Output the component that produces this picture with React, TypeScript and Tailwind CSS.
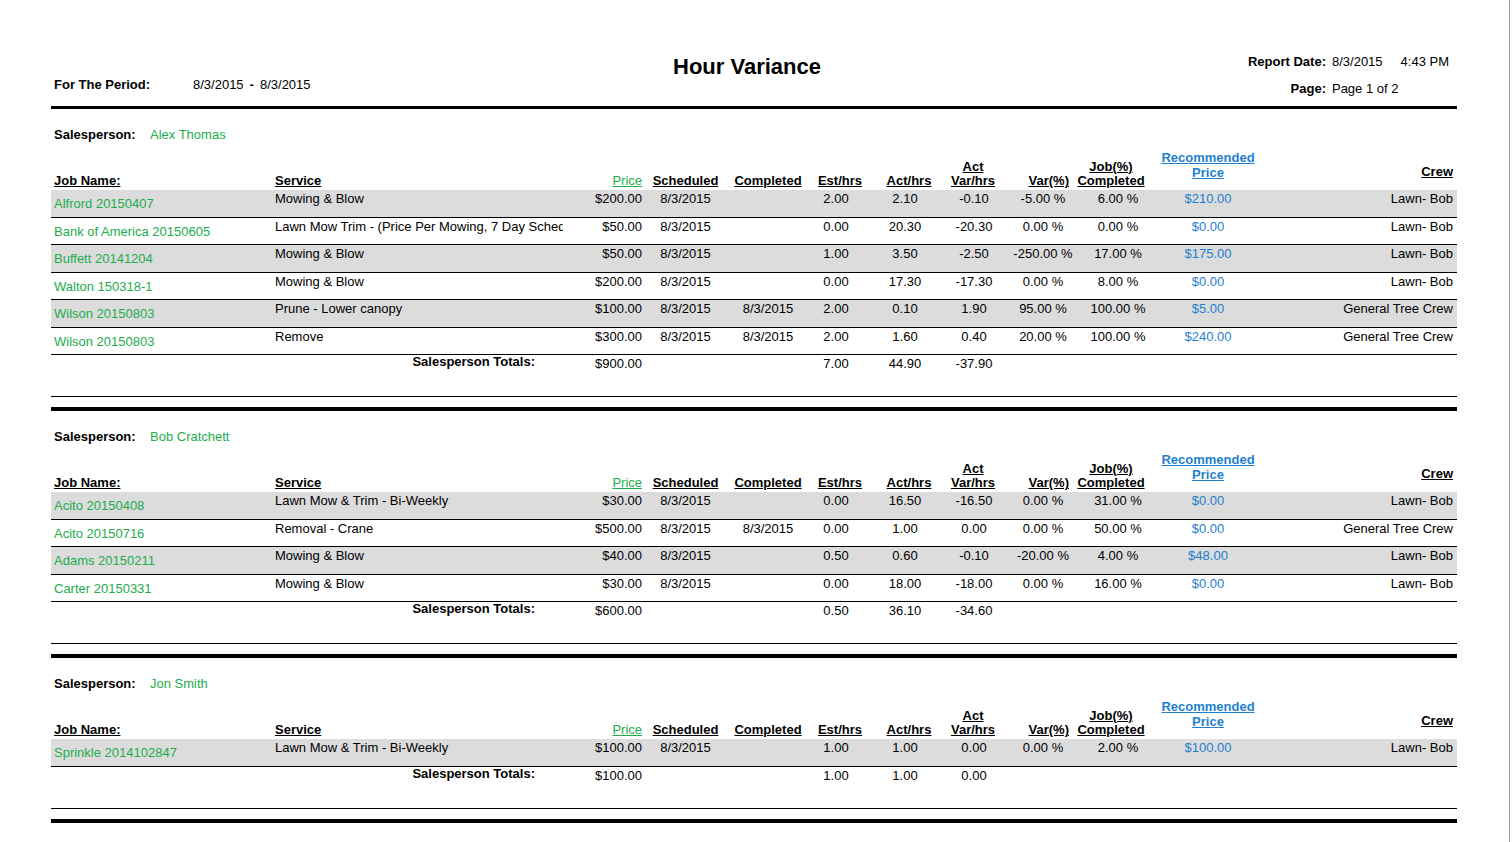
import React from 'react';

type Row = {
  job: string;
  service: string;
  price: string;
  scheduled: string;
  completed: string;
  est: string;
  act: string;
  varHrs: string;
  varPct: string;
  jobPct: string;
  rec: string;
  crew: string;
};

type Section = {
  salesperson: string;
  rows: Row[];
  totals: { price: string; est: string; act: string; varHrs: string };
};

const sections: Section[] = [
  {
    salesperson: 'Alex Thomas',
    rows: [
      { job: 'Alfrord 20150407', service: 'Mowing & Blow', price: '$200.00', scheduled: '8/3/2015', completed: '', est: '2.00', act: '2.10', varHrs: '-0.10', varPct: '-5.00 %', jobPct: '6.00 %', rec: '$210.00', crew: 'Lawn- Bob' },
      { job: 'Bank of America 20150605', service: 'Lawn Mow Trim - (Price Per Mowing, 7 Day Schedule)', price: '$50.00', scheduled: '8/3/2015', completed: '', est: '0.00', act: '20.30', varHrs: '-20.30', varPct: '0.00 %', jobPct: '0.00 %', rec: '$0.00', crew: 'Lawn- Bob' },
      { job: 'Buffett 20141204', service: 'Mowing & Blow', price: '$50.00', scheduled: '8/3/2015', completed: '', est: '1.00', act: '3.50', varHrs: '-2.50', varPct: '-250.00 %', jobPct: '17.00 %', rec: '$175.00', crew: 'Lawn- Bob' },
      { job: 'Walton 150318-1', service: 'Mowing & Blow', price: '$200.00', scheduled: '8/3/2015', completed: '', est: '0.00', act: '17.30', varHrs: '-17.30', varPct: '0.00 %', jobPct: '8.00 %', rec: '$0.00', crew: 'Lawn- Bob' },
      { job: 'Wilson 20150803', service: 'Prune - Lower canopy', price: '$100.00', scheduled: '8/3/2015', completed: '8/3/2015', est: '2.00', act: '0.10', varHrs: '1.90', varPct: '95.00 %', jobPct: '100.00 %', rec: '$5.00', crew: 'General Tree Crew' },
      { job: 'Wilson 20150803', service: 'Remove', price: '$300.00', scheduled: '8/3/2015', completed: '8/3/2015', est: '2.00', act: '1.60', varHrs: '0.40', varPct: '20.00 %', jobPct: '100.00 %', rec: '$240.00', crew: 'General Tree Crew' },
    ],
    totals: { price: '$900.00', est: '7.00', act: '44.90', varHrs: '-37.90' },
  },
  {
    salesperson: 'Bob Cratchett',
    rows: [
      { job: 'Acito 20150408', service: 'Lawn Mow & Trim - Bi-Weekly', price: '$30.00', scheduled: '8/3/2015', completed: '', est: '0.00', act: '16.50', varHrs: '-16.50', varPct: '0.00 %', jobPct: '31.00 %', rec: '$0.00', crew: 'Lawn- Bob' },
      { job: 'Acito 20150716', service: 'Removal - Crane', price: '$500.00', scheduled: '8/3/2015', completed: '8/3/2015', est: '0.00', act: '1.00', varHrs: '0.00', varPct: '0.00 %', jobPct: '50.00 %', rec: '$0.00', crew: 'General Tree Crew' },
      { job: 'Adams 20150211', service: 'Mowing & Blow', price: '$40.00', scheduled: '8/3/2015', completed: '', est: '0.50', act: '0.60', varHrs: '-0.10', varPct: '-20.00 %', jobPct: '4.00 %', rec: '$48.00', crew: 'Lawn- Bob' },
      { job: 'Carter 20150331', service: 'Mowing & Blow', price: '$30.00', scheduled: '8/3/2015', completed: '', est: '0.00', act: '18.00', varHrs: '-18.00', varPct: '0.00 %', jobPct: '16.00 %', rec: '$0.00', crew: 'Lawn- Bob' },
    ],
    totals: { price: '$600.00', est: '0.50', act: '36.10', varHrs: '-34.60' },
  },
  {
    salesperson: 'Jon Smith',
    rows: [
      { job: 'Sprinkle 2014102847', service: 'Lawn Mow & Trim - Bi-Weekly', price: '$100.00', scheduled: '8/3/2015', completed: '', est: '1.00', act: '1.00', varHrs: '0.00', varPct: '0.00 %', jobPct: '2.00 %', rec: '$100.00', crew: 'Lawn- Bob' },
    ],
    totals: { price: '$100.00', est: '1.00', act: '1.00', varHrs: '0.00' },
  },
];

function HeaderRow() {
  return (
    <div className="flex items-end h-[48px] pb-[2px] font-bold leading-[14px] [&>div]:underline [&>div]:underline-offset-[1px]">
      <div className="w-[221px] pl-[3px]">Job Name:</div>
      <div className="w-[291px] pl-[3px]">Service</div>
      <div className="w-[82px] pr-[3px] text-right text-[#22ad4c] font-normal">Price</div>
      <div className="w-[81px] text-center">Scheduled</div>
      <div className="w-[84px] text-center">Completed</div>
      <div className="w-[60px] text-center">Est/hrs</div>
      <div className="w-[78px] text-center">Act/hrs</div>
      <div className="w-[50px] text-center whitespace-nowrap">Act<br />Var/hrs</div>
      <div className="w-[74px] pr-[3px] text-right">Var(%)</div>
      <div className="w-[78px] text-center whitespace-nowrap">Job(%)<br />Completed</div>
      <div className="w-[116px] text-center text-[#1f7fcf] leading-[15px] mb-[8px]">Recommended<br />Price</div>
      <div className="flex-1 pr-[4px] text-right mb-[9px]">Crew</div>
    </div>
  );
}

function DataRow({ row, shaded }: { row: Row; shaded: boolean }) {
  return (
    <div className={`flex h-[27.5px] border-b border-black leading-[18px] ${shaded ? 'bg-[#dcdcdd]' : ''}`}>
      <div className="w-[221px] pl-[3px] pt-[5px] text-[#22ad4c] whitespace-nowrap">{row.job}</div>
      <div className="w-[291px] pl-[3px] overflow-hidden whitespace-nowrap">{row.service}</div>
      <div className="w-[82px] pr-[3px] text-right">{row.price}</div>
      <div className="w-[81px] text-center">{row.scheduled}</div>
      <div className="w-[84px] text-center">{row.completed}</div>
      <div className="w-[52px] text-center">{row.est}</div>
      <div className="w-[86px] text-center">{row.act}</div>
      <div className="w-[52px] text-center">{row.varHrs}</div>
      <div className="w-[86px] text-center whitespace-nowrap">{row.varPct}</div>
      <div className="w-[64px] text-center whitespace-nowrap">{row.jobPct}</div>
      <div className="w-[116px] text-center text-[#1f7fcf]">{row.rec}</div>
      <div className="flex-1 pr-[4px] text-right whitespace-nowrap">{row.crew}</div>
    </div>
  );
}

function SectionBlock({ section }: { section: Section }) {
  return (
    <div>
      <div className="flex h-[33px] pt-[18px] leading-[15px]">
        <span className="w-[99px] pl-[3px] font-bold">Salesperson:</span>
        <span className="text-[#22ad4c]">{section.salesperson}</span>
      </div>
      <HeaderRow />
      {section.rows.map((r, i) => (
        <DataRow key={i} row={r} shaded={i % 2 === 0} />
      ))}
      <div className="flex h-[42px] border-b border-black leading-[18px]">
        <div className="w-[484px] text-right font-bold leading-[14px]">Salesperson Totals:</div>
        <div className="w-[110px] pr-[3px] text-right">{section.totals.price}</div>
        <div className="w-[165px]" />
        <div className="w-[52px] text-center">{section.totals.est}</div>
        <div className="w-[86px] text-center">{section.totals.act}</div>
        <div className="w-[52px] text-center">{section.totals.varHrs}</div>
      </div>
      <div className="h-[10px]" />
      <div className="h-[4px] bg-black" />
    </div>
  );
}

export default function App() {
  return (
    <div className="w-[1510px] min-h-[842px] bg-white border-r border-[#9a9a9a] text-black text-[13px] font-['Liberation_Sans',Arial,sans-serif]">
      <div className="ml-[51px] w-[1406px]">
        {/* Report header */}
        <div className="flex h-[106px]">
          <div className="w-[622px] pt-[77px] pl-[3px] leading-[16px] flex">
            <span className="w-[139px] font-bold">For The Period:</span>
            <span>8/3/2015</span>
            <span className="px-[6px] font-bold">-</span>
            <span>8/3/2015</span>
          </div>
          <div className="pt-[54px] text-[22px] leading-[26px] font-bold whitespace-nowrap">Hour Variance</div>
          <div className="flex-1 flex justify-end pr-[8px]">
            <div className="grid grid-cols-[auto_auto] gap-x-[6px] gap-y-[11px] pt-[54px] leading-[16px] h-fit">
              <span className="text-right font-bold">Report Date:</span>
              <span className="flex gap-[18px]">
                <span>8/3/2015</span>
                <span>4:43 PM</span>
              </span>
              <span className="text-right font-bold">Page:</span>
              <span>Page 1 of 2</span>
            </div>
          </div>
        </div>
        <div className="h-[3px] bg-black" />

        {sections.map((s, i) => (
          <SectionBlock key={i} section={s} />
        ))}
      </div>
    </div>
  );
}
